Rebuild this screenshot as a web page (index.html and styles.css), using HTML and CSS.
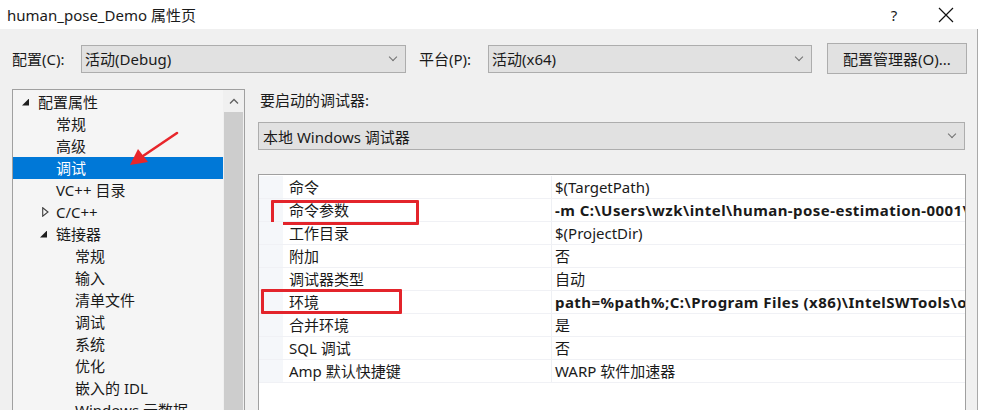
FILE: index.html
```html
<!DOCTYPE html>
<html lang="zh-CN">
<head>
  <meta charset="UTF-8">
  <title>human_pose_Demo 属性页</title>
  <link rel="stylesheet" href="styles.css">
</head>
<body>

<div class="titlebar">
  <span class="title">human_pose_Demo 属性页</span>
  <span class="tb-btn help">?</span>
  <span class="tb-btn close">
    <svg width="16" height="16" viewBox="0 0 16 16"><path d="M1 1 L15 15 M15 1 L1 15" stroke="#111" stroke-width="1.2" fill="none"/></svg>
  </span>
</div>

<div class="window">
  <!-- 配置 / 平台 -->
  <div class="config-row">
    <label class="cfg-label">配置(C):</label>
    <div class="combo combo-config">活动(Debug)<span class="chev"></span></div>
    <label class="cfg-label plat">平台(P):</label>
    <div class="combo combo-plat">活动(x64)<span class="chev"></span></div>
    <button class="btn">配置管理器(O)...</button>
  </div>

  <div class="main">
    <!-- 左侧树 -->
    <div class="tree">
      <div class="tree-items">
        <div class="node lv0"><span class="tri open"></span>配置属性</div>
        <div class="node lv1">常规</div>
        <div class="node lv1">高级</div>
        <div class="node lv1 selected">调试</div>
        <div class="node lv1">VC++ 目录</div>
        <div class="node lv1 has-tri">
          <svg class="tri-closed" width="7" height="10" viewBox="0 0 7 10"><path d="M0.7 0.8 L6 5 L0.7 9.2 Z" stroke="#404040" stroke-width="1.1" fill="none"/></svg>C/C++
        </div>
        <div class="node lv1 has-tri"><span class="tri open"></span>链接器</div>
        <div class="node lv2">常规</div>
        <div class="node lv2">输入</div>
        <div class="node lv2">清单文件</div>
        <div class="node lv2">调试</div>
        <div class="node lv2">系统</div>
        <div class="node lv2">优化</div>
        <div class="node lv2">嵌入的 IDL</div>
        <div class="node lv2">Windows 元数据</div>
      </div>
      <div class="scrollbar">
        <div class="sb-up">
          <svg width="10" height="6" viewBox="0 0 10 6"><path d="M1 5.5 L5 1.5 L9 5.5" stroke="#606060" stroke-width="1.3" fill="none"/></svg>
        </div>
        <div class="sb-thumb"></div>
      </div>
      <!-- 红色箭头标注 -->
      <svg class="arrow" width="60" height="40" viewBox="0 0 60 40">
        <path d="M52 3 L18 26" stroke="#e8262b" stroke-width="2.6" stroke-linecap="round"/>
        <path d="M5 35 L13 19 L23 32 Z" fill="#e8262b"/>
      </svg>
    </div>

    <!-- 右侧 -->
    <div class="panel">
      <div class="panel-label">要启动的调试器:</div>
      <div class="combo combo-debugger">本地 Windows 调试器<span class="chev"></span></div>

      <div class="grid">
        <div class="row"><span class="gut"></span><span class="name">命令</span><span class="val">$(TargetPath)</span></div>
        <div class="row"><span class="gut"></span><span class="name">命令参数</span><span class="val bold">-m C:\Users\wzk\intel\human-pose-estimation-0001\FP32\human-pose-estimation-0001.xml</span><span class="mark mark-args"></span></div>
        <div class="row"><span class="gut"></span><span class="name">工作目录</span><span class="val">$(ProjectDir)</span></div>
        <div class="row"><span class="gut"></span><span class="name">附加</span><span class="val">否</span></div>
        <div class="row"><span class="gut"></span><span class="name">调试器类型</span><span class="val">自动</span></div>
        <div class="row"><span class="gut"></span><span class="name">环境</span><span class="val bold">path=%path%;C:\Program Files (x86)\IntelSWTools\openvino\bin</span><span class="mark mark-env"></span></div>
        <div class="row"><span class="gut"></span><span class="name">合并环境</span><span class="val">是</span></div>
        <div class="row"><span class="gut"></span><span class="name">SQL 调试</span><span class="val">否</span></div>
        <div class="row"><span class="gut"></span><span class="name">Amp 默认快捷键</span><span class="val">WARP 软件加速器</span></div>
      </div>
    </div>
  </div>
</div>

</body>
</html>
```

FILE: styles.css
```css
body {
  margin: 0;
  background: #ffffff;
  font-family: "Noto Sans", "Noto Sans CJK SC", sans-serif;
  font-size: 15px;
  color: #1a1a1a;
  overflow: hidden;
}

.titlebar {
  height: 29px;
  display: flex;
  align-items: center;
  background: #ffffff;
}

.title {
  margin-left: 7px;
  font-size: 15px;
  flex: 1;
}

.tb-btn {
  display: flex;
  align-items: center;
  justify-content: center;
}

.help {
  width: 20px;
  margin-right: 32px;
  font-size: 15px;
}

.close {
  width: 20px;
  margin-right: 25px;
}

.window {
  width: 977px;
  height: 381px;
  background: #f0f0f0;
  border-right: 1px solid #a9a9a9;
  overflow: hidden;
}

.config-row {
  display: flex;
  align-items: center;
  height: 31px;
  padding-top: 14px;
}

.cfg-label {
  width: 69px;
  margin-left: 12px;
}

.cfg-label.plat {
  margin-left: 13px;
}

.combo {
  position: relative;
  box-sizing: border-box;
  height: 28px;
  border: 1px solid #adadad;
  background: #e1e1e1;
  display: flex;
  align-items: center;
  padding-left: 3px;
}

.chev {
  position: absolute;
  right: 9px;
  top: 8px;
  width: 5px;
  height: 5px;
  border-right: 1px solid #707070;
  border-bottom: 1px solid #707070;
  transform: rotate(45deg);
}

.combo-config {
  width: 325px;
}

.combo-plat {
  width: 324px;
}

.btn {
  margin-left: 15px;
  width: 140px;
  height: 31px;
  border: 1px solid #adadad;
  background: #e1e1e1;
  font-family: inherit;
  font-size: 15px;
  color: #1a1a1a;
  padding: 0;
}

.main {
  display: flex;
  margin-top: 15px;
}

/* 树 */
.tree {
  position: relative;
  margin-left: 12px;
  width: 233px;
  height: 330px;
  box-sizing: border-box;
  border: 1px solid #a0a0a0;
  background: #f5f5f5;
  display: flex;
}

.tree-items {
  flex: 1;
  padding-top: 1px;
}

.node {
  height: 22px;
  line-height: 22px;
  white-space: nowrap;
  display: flex;
  align-items: center;
}

.lv0 { padding-left: 9px; }
.lv1 { padding-left: 43px; }
.lv1.has-tri { padding-left: 27px; }
.lv2 { padding-left: 62px; }

.selected {
  background: #0078d7;
  color: #ffffff;
}

.tri {
  width: 7px;
  height: 7px;
  margin-right: 9px;
  display: inline-block;
}

.tri.open {
  background: #1e1e1e;
  clip-path: polygon(100% 0, 100% 100%, 0 100%);
}

.tri-closed {
  margin-left: 2px;
  margin-right: 7px;
}

.scrollbar {
  width: 21px;
  background: #f0f0f0;
  display: flex;
  flex-direction: column;
}

.sb-up {
  height: 22px;
  display: flex;
  align-items: center;
  justify-content: center;
}

.sb-thumb {
  flex: 1;
  background: #cdcdcd;
  margin: 0 1px;
}

.arrow {
  position: absolute;
  left: 112px;
  top: 40px;
}

/* 右侧面板 */
.panel {
  margin-left: 13px;
  width: 708px;
}

.panel-label {
  height: 22px;
  line-height: 22px;
  margin-left: 2px;
}

.combo-debugger {
  margin-top: 11px;
  width: 707px;
  padding-left: 4px;
}

.grid {
  margin-top: 24px;
  width: 708px;
  height: 260px;
  box-sizing: border-box;
  border: 1px solid #a0a0a0;
  background: #ffffff;
  padding-top: 1px;
}

.row {
  position: relative;
  display: flex;
  height: 23px;
  line-height: 22px;
  border-bottom: 1px solid #f0f1f5;
  box-sizing: border-box;
}

.gut {
  width: 24px;
  background: #f5f7fa;
  flex: none;
}

.name {
  width: 269px;
  padding-left: 6px;
  box-sizing: border-box;
  border-right: 1px solid #eef0f4;
  flex: none;
}

.val {
  padding-left: 3px;
  white-space: nowrap;
  overflow: hidden;
  flex: 1;
}

.bold {
  font-weight: bold;
  letter-spacing: 0.45px;
}

.mark {
  position: absolute;
  border: 3px solid #e3242b;
  border-radius: 1px;
  box-sizing: border-box;
}

.mark-args {
  left: 12px;
  top: 1px;
  width: 148px;
  height: 25px;
}

.mark-env {
  left: 2px;
  top: -2px;
  width: 141px;
  height: 25px;
}
```
